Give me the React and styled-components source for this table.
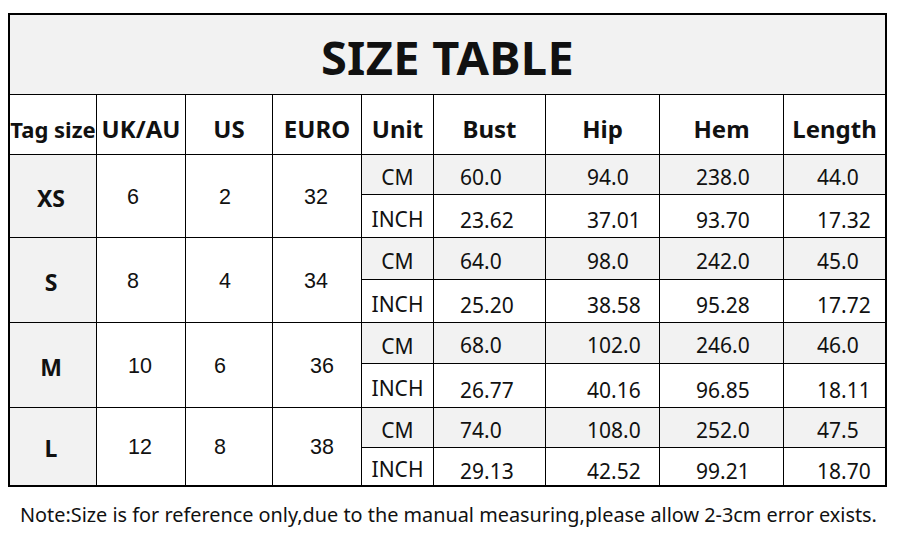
import React from "react";
import styled, { createGlobalStyle } from "styled-components";

const GlobalStyle = createGlobalStyle`
  html, body {
    margin: 0;
    padding: 0;
    background: #ffffff;
  }
`;

const Page = styled.div`
  width: 900px;
  height: 538px;
  padding: 13px 0 0 8px;
  box-sizing: border-box;
  font-family: "Noto Sans", "Open Sans", sans-serif;
  color: #111;
`;

const Table = styled.div`
  display: grid;
  width: 879px;
  box-sizing: border-box;
  grid-template-columns: 86px 88px 86px 88px 71px 111px 113px 123px 101px;
  grid-template-rows: 79px 59px 39px 42px 41px 42px 40px 43px 39px 37px;
  gap: 1px;
  background: #000;
  border: 2px solid #000;
`;

const Cell = styled.div`
  display: flex;
  align-items: center;
  justify-content: ${(p) => (p.$pad != null ? "flex-start" : "center")};
  padding-left: ${(p) => (p.$pad != null ? `${p.$pad}px` : "0")};
  padding-top: ${(p) => p.$shift || 0}px;
  background: ${(p) => (p.$gray ? "#f2f2f2" : "#ffffff")};
  grid-row: ${(p) => (p.$span ? `span ${p.$span}` : "auto")};
  box-sizing: border-box;
  white-space: nowrap;
  font-size: 21px;
`;

const Title = styled(Cell)`
  grid-column: 1 / -1;
  background: #f2f2f2;
  font-size: 47px;
  font-weight: 700;
  padding-top: 4px;
  letter-spacing: 0.3px;
`;

const Head = styled(Cell)`
  font-size: ${(p) => p.$size || 24}px;
  font-weight: 700;
  padding-top: 8px;
`;

const TagCell = styled(Cell)`
  font-size: 23px;
  font-weight: 700;
  padding-top: 3px;
  padding-right: 4px;
`;

// centred number, nudged sideways by $dx (negative = left)
const PlainNum = styled(Cell)`
  font-family: "Liberation Sans", Arial, sans-serif;
  font-size: 21.5px;
  padding-top: 2px;
  padding-left: ${(p) => (p.$dx > 0 ? p.$dx * 2 : 0)}px;
  padding-right: ${(p) => (p.$dx < 0 ? -p.$dx * 2 : 0)}px;
`;

const Note = styled.p`
  margin: 14px 0 0 12px;
  font-size: 19.85px;
  color: #111;
  white-space: nowrap;
`;

const headers = [
  { label: "Tag size", size: 22 },
  { label: "UK/AU" },
  { label: "US" },
  { label: "EURO" },
  { label: "Unit" },
  { label: "Bust" },
  { label: "Hip" },
  { label: "Hem" },
  { label: "Length" },
];

const sizes = [
  {
    tag: "XS", uk: ["6", -8], us: ["2", -4], eu: ["32", -1],
    cm: ["60.0", "94.0", "238.0", "44.0"],
    inch: ["23.62", "37.01", "93.70", "17.32"],
  },
  {
    tag: "S", uk: ["8", -8], us: ["4", -4], eu: ["34", -1],
    cm: ["64.0", "98.0", "242.0", "45.0"],
    inch: ["25.20", "38.58", "95.28", "17.72"],
  },
  {
    tag: "M", uk: ["10", -1], us: ["6", -9], eu: ["36", 5],
    cm: ["68.0", "102.0", "246.0", "46.0"],
    inch: ["26.77", "40.16", "96.85", "18.11"],
  },
  {
    tag: "L", uk: ["12", -1], us: ["8", -9], eu: ["38", 5],
    cm: ["74.0", "108.0", "252.0", "47.5"],
    inch: ["29.13", "42.52", "99.21", "18.70"],
  },
];

// left offsets of the values in Bust / Hip / Hem / Length
const valuePad = [26, 41, 36, 33];

const SizeBlock = ({ s }) => (
  <>
    <TagCell $span={2} $gray>{s.tag}</TagCell>
    <PlainNum $span={2} $dx={s.uk[1]}>{s.uk[0]}</PlainNum>
    <PlainNum $span={2} $dx={s.us[1]}>{s.us[0]}</PlainNum>
    <PlainNum $span={2} $dx={s.eu[1]}>{s.eu[0]}</PlainNum>
    <Cell $gray $shift={5}>CM</Cell>
    {s.cm.map((v, i) => (
      <Cell key={"c" + i} $gray $pad={valuePad[i]} $shift={4}>
        {v}
      </Cell>
    ))}
    <Cell $shift={5}>INCH</Cell>
    {s.inch.map((v, i) => (
      <Cell key={"i" + i} $pad={valuePad[i]} $shift={8}>
        {v}
      </Cell>
    ))}
  </>
);

const App = () => {
  return (
    <Page>
      <GlobalStyle />
      <Table>
        <Title>SIZE TABLE</Title>
        {headers.map((h) => (
          <Head key={h.label} $size={h.size}>
            {h.label}
          </Head>
        ))}
        {sizes.map((s) => (
          <SizeBlock key={s.tag} s={s} />
        ))}
      </Table>
      <Note>
        Note:Size is for reference only,due to the manual measuring,please allow 2-3cm error exists.
      </Note>
    </Page>
  );
};

export default App;
